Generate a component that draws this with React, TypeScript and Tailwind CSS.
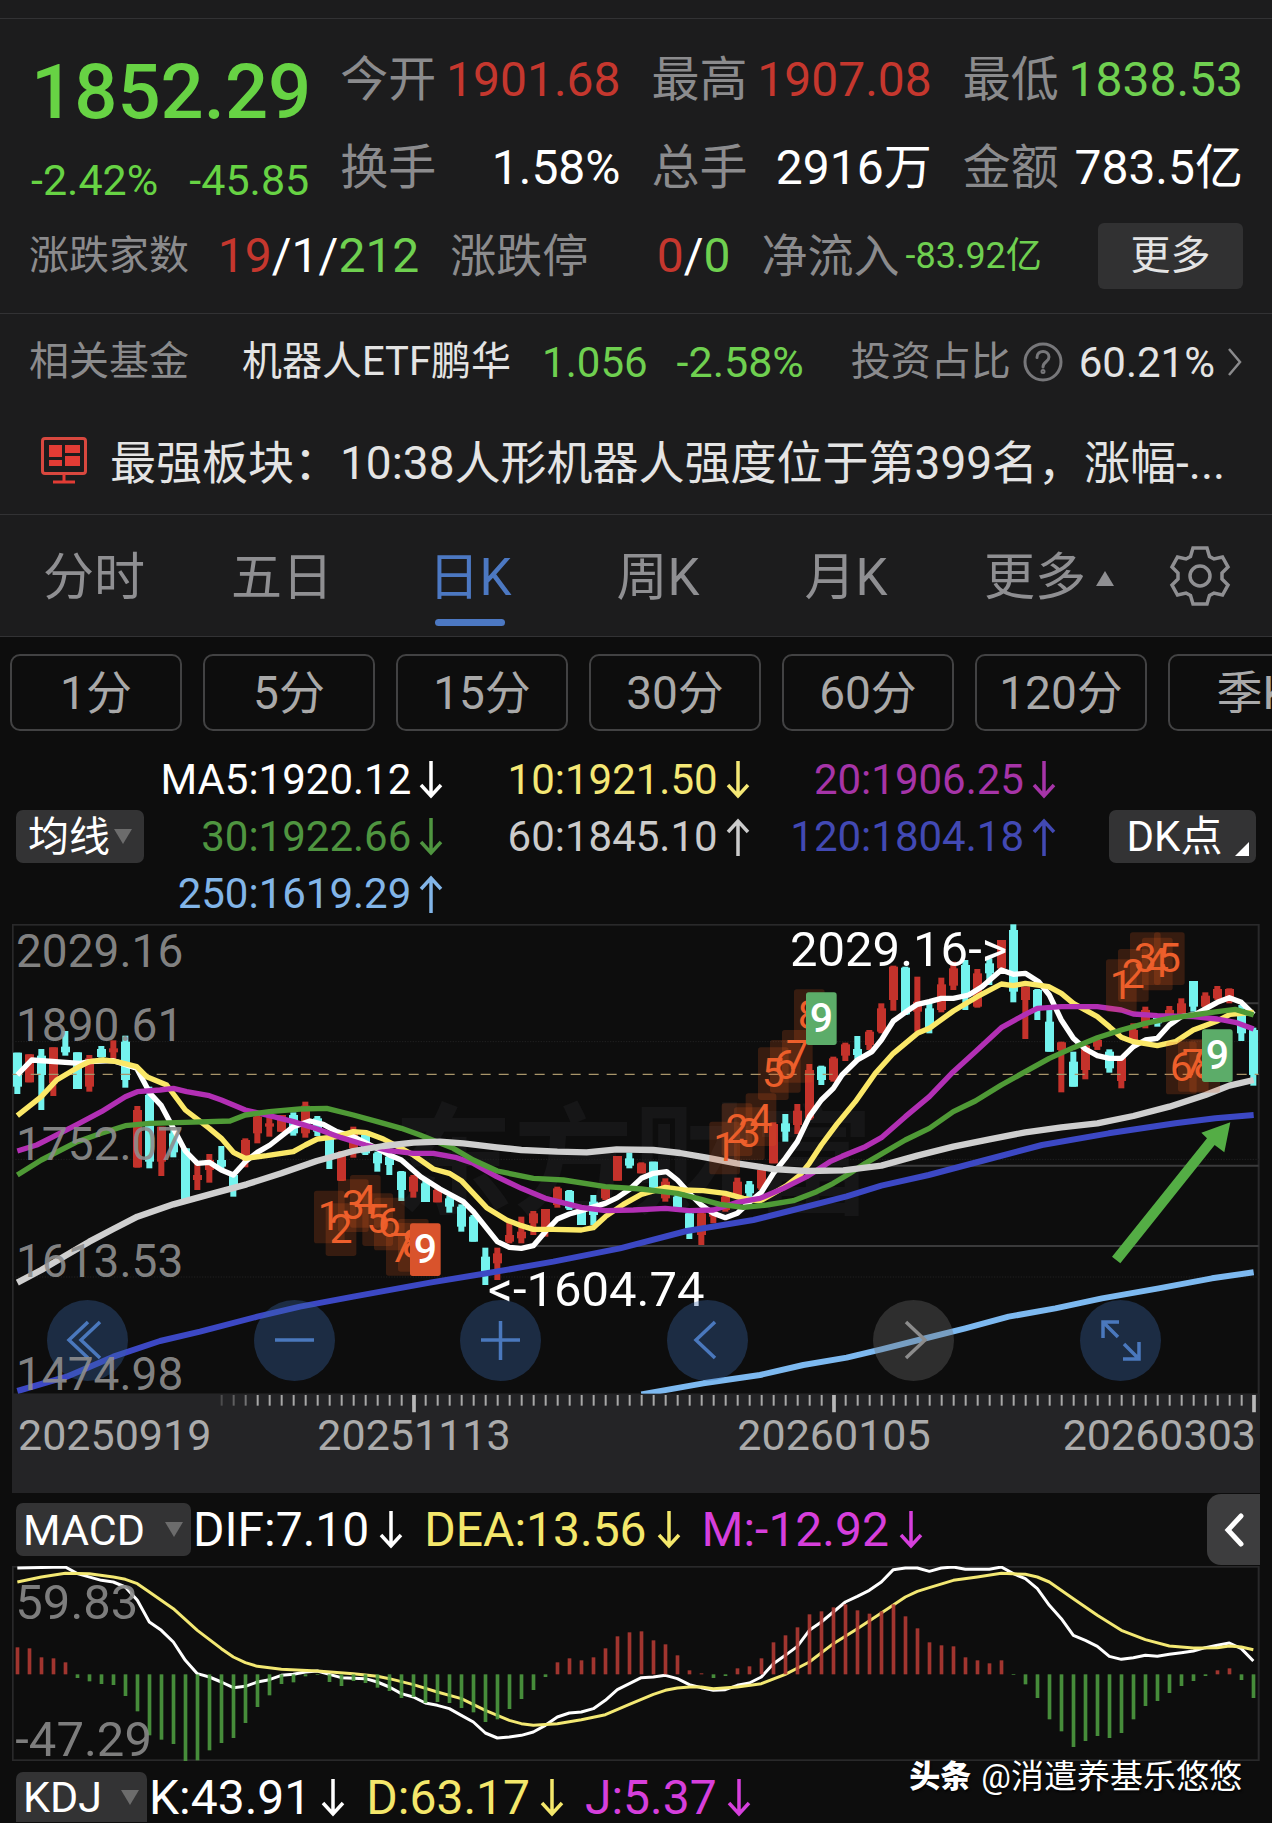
import React from "react";

type Candle = [kind: "u" | "d", high: number, low: number, top: number, bottom: number];
type Point = [number, number];

/* Chart geometry: three drawing units per pixel, one trading day every 36 units. */
const STEP = 36;
const FIRST = 52;
const dayX = (i: number) => FIRST + STEP * i;

const CANDLES: Candle[] = [
  ["d", 413, 537, 413, 515], ["u", 418, 502, 418, 502], ["d", 402, 585, 422, 480], ["u", 397, 543, 397, 505],
  ["d", 348, 422, 395, 412], ["d", 412, 522, 412, 522], ["u", 420, 530, 430, 515], ["d", 393, 428, 402, 426],
  ["u", 376, 435, 400, 412], ["d", 362, 518, 380, 495], ["u", 573, 758, 585, 757], ["d", 515, 760, 540, 740],
  ["u", 635, 783, 635, 740], ["d", 640, 727, 655, 712], ["d", 700, 855, 700, 855], ["u", 740, 825, 780, 795],
  ["u", 717, 803, 735, 765], ["d", 693, 765, 735, 755], ["d", 775, 845, 780, 815], ["u", 670, 757, 675, 730],
  ["u", 600, 685, 605, 655], ["u", 600, 665, 625, 635], ["u", 600, 650, 600, 650], ["d", 592, 662, 600, 655],
  ["u", 560, 668, 572, 655], ["d", 603, 663, 610, 650], ["d", 670, 762, 672, 732], ["u", 708, 798, 712, 797],
  ["u", 635, 728, 645, 700], ["d", 655, 720, 660, 715], ["d", 710, 770, 715, 745], ["d", 715, 780, 725, 750],
  ["d", 768, 858, 770, 825], ["u", 780, 848, 785, 830], ["d", 795, 861, 805, 861], ["u", 815, 862, 825, 862],
  ["d", 843, 893, 850, 875], ["d", 868, 950, 875, 935], ["d", 900, 980, 905, 980], ["d", 998, 1110, 1025, 1080],
  ["u", 998, 1095, 1015, 1045], ["u", 920, 985, 960, 980], ["u", 905, 985, 950, 970], ["u", 888, 960, 895, 925],
  ["u", 882, 965, 882, 950], ["u", 815, 878, 820, 870], ["d", 825, 885, 828, 880], ["d", 885, 930, 890, 930],
  ["d", 840, 930, 860, 900], ["u", 820, 855, 820, 850], ["u", 723, 797, 723, 797], ["d", 712, 760, 730, 752],
  ["u", 742, 775, 745, 775], ["d", 740, 820, 740, 818], ["u", 790, 860, 800, 850], ["d", 840, 880, 845, 878],
  ["d", 890, 972, 895, 940], ["u", 890, 990, 895, 960], ["u", 880, 925, 890, 905], ["u", 835, 890, 845, 885],
  ["u", 788, 840, 800, 840], ["d", 798, 850, 808, 835], ["u", 765, 825, 765, 820], ["u", 622, 745, 627, 745],
  ["d", 597, 680, 625, 650], ["u", 567, 657, 587, 630], ["u", 447, 615, 465, 610], ["d", 452, 510, 455, 495],
  ["u", 425, 500, 430, 495], ["u", 383, 438, 388, 422], ["d", 363, 432, 402, 420], ["u", 345, 405, 350, 390],
  ["u", 265, 355, 280, 350], ["u", 152, 287, 155, 255], ["d", 155, 300, 158, 298], ["u", 185, 350, 260, 290],
  ["d", 255, 355, 280, 340], ["u", 188, 292, 208, 285], ["u", 140, 225, 160, 212], ["d", 135, 285, 150, 240],
  ["u", 162, 278, 175, 275], ["d", 130, 210, 145, 175], ["u", 75, 165, 75, 160], ["d", 28, 262, 45, 230],
  ["u", 215, 372, 215, 255], ["d", 222, 315, 225, 280], ["d", 275, 410, 320, 410], ["u", 380, 532, 382, 405],
  ["d", 410, 515, 440, 515], ["u", 390, 493, 392, 465], ["u", 370, 405, 375, 395], ["d", 403, 473, 410, 460],
  ["u", 425, 520, 425, 498], ["u", 325, 380, 345, 375], ["u", 275, 340, 285, 325], ["d", 300, 335, 302, 325],
  ["u", 273, 310, 285, 305], ["u", 250, 305, 265, 300], ["d", 198, 290, 198, 275], ["u", 232, 280, 242, 275],
  ["u", 213, 255, 222, 250], ["u", 220, 265, 222, 250], ["d", 270, 378, 300, 355], ["d", 338, 512, 345, 480],
];

const MA_LINES: { color: string; width: number; points: string }[] = [
  {
    color: "#ffffff", width: 16,
    points: "52,480 95,435 240,445 268,440 340,437 410,460 450,535 484,572 520,640 556,708 592,745 628,742 664,765 700,780 736,740 772,712 810,690 880,635 930,618 970,628 1010,650 1060,665 1120,695 1168,720 1204,735 1262,785 1320,822 1390,860 1420,890 1492,980 1528,997 1564,1000 1600,992 1636,950 1672,912 1708,897 1744,887 1816,865 1852,848 1890,822 1924,790 1960,775 2000,770 2032,795 2068,835 2104,870 2140,895 2176,908 2212,895 2248,862 2284,832 2320,775 2356,730 2392,680 2428,605 2464,555 2500,520 2526,480 2572,435 2616,410 2644,375 2680,318 2716,292 2752,268 2788,260 2824,250 2860,250 2906,240 2946,215 3004,165 3040,178 3076,175 3116,200 3148,240 3184,315 3220,370 3256,402 3292,422 3328,430 3364,430 3400,395 3436,375 3472,370 3508,330 3544,305 3586,298 3652,262 3688,248 3724,262 3761,298",
  },
  {
    color: "#fbe868", width: 16,
    points: "52,602 124,545 170,495 232,458 268,440 310,435 350,440 410,455 440,485 500,510 556,585 628,640 664,670 700,712 736,730 800,722 880,710 916,690 952,672 1010,665 1060,650 1100,653 1150,672 1204,700 1240,720 1300,762 1348,775 1384,797 1420,835 1460,878 1520,915 1564,932 1600,943 1660,943 1744,945 1780,938 1816,905 1870,868 1924,838 1996,817 2050,825 2110,827 2176,835 2230,850 2280,858 2320,835 2360,812 2400,780 2428,745 2464,690 2510,628 2566,560 2626,475 2680,415 2716,385 2752,355 2788,340 2860,288 2932,245 3004,207 3040,212 3076,205 3146,215 3184,235 3220,265 3292,305 3328,335 3364,367 3400,380 3472,392 3526,380 3580,345 3652,318 3690,298 3761,292",
  },
  {
    color: "#b22fb4", width: 16,
    points: "52,708 110,690 160,665 232,628 304,590 376,545 412,530 480,525 520,520 560,530 628,542 664,555 736,585 808,602 880,620 952,642 1024,668 1096,690 1168,707 1240,715 1300,715 1370,728 1420,745 1490,785 1564,820 1636,850 1744,877 1816,887 1900,885 1996,880 2068,887 2140,885 2212,862 2280,850 2350,820 2420,785 2490,740 2526,724 2596,695 2644,668 2716,605 2788,545 2860,470 2926,410 3004,338 3076,298 3112,280 3184,275 3292,275 3364,285 3400,297 3472,302 3580,305 3652,312 3706,322 3761,342",
  },
  {
    color: "#4f9a36", width: 16,
    points: "52,780 124,735 232,680 304,655 376,632 450,625 556,622 690,618 736,600 808,590 900,582 980,580 1060,600 1132,620 1204,640 1260,660 1310,680 1360,700 1420,735 1492,768 1600,790 1690,795 1816,815 1924,822 2032,835 2104,853 2160,868 2230,877 2300,870 2380,857 2450,830 2500,805 2550,775 2596,745 2716,675 2788,640 2860,590 2926,558 3004,510 3076,470 3148,430 3220,398 3292,368 3364,345 3436,325 3508,310 3580,300 3652,290 3706,283 3761,300",
  },
  {
    color: "#cfcfcf", width: 19,
    points: "52,1103 124,1065 196,1022 268,980 340,942 412,905 520,868 640,835 740,808 844,775 950,738 1060,708 1150,693 1240,683 1320,680 1390,685 1490,697 1564,705 1672,710 1760,712 1850,703 1960,705 2040,714 2120,728 2210,745 2320,762 2420,768 2530,766 2644,752 2752,722 2860,695 2968,673 3076,652 3184,637 3292,625 3400,603 3508,575 3616,540 3688,512 3761,495",
  },
  {
    color: "#3c48c4", width: 18,
    points: "52,1428 200,1385 340,1325 480,1278 600,1250 772,1205 900,1175 1060,1145 1290,1103 1460,1075 1660,1040 1860,1000 2060,948 2260,915 2380,885 2540,844 2644,812 2786,780 2956,735 3126,690 3326,655 3526,625 3646,610 3761,600",
  },
  {
    color: "#7db9f0", width: 18,
    points: "1924,1438 2110,1405 2280,1380 2410,1350 2540,1328 2644,1303 2756,1275 2896,1240 3026,1205 3166,1180 3306,1150 3476,1120 3636,1090 3761,1072",
  },
];

const COUNTS: { label: string; x: number; y: number; solid?: string }[] = [
  { label: "1", x: 942, y: 827 }, { label: "2", x: 977, y: 865 }, { label: "3", x: 1014, y: 793 },
  { label: "4", x: 1050, y: 780 }, { label: "5", x: 1087, y: 835 }, { label: "6", x: 1122, y: 848 },
  { label: "7", x: 1158, y: 924 }, { label: "8", x: 1194, y: 912 }, { label: "9", x: 1230, y: 925, solid: "#d9532c" },
  { label: "1", x: 2128, y: 620 }, { label: "2", x: 2165, y: 565 }, { label: "3", x: 2202, y: 577 },
  { label: "4", x: 2237, y: 535 }, { label: "5", x: 2274, y: 397 }, { label: "6", x: 2310, y: 375 },
  { label: "7", x: 2346, y: 345 }, { label: "8", x: 2382, y: 223 }, { label: "9", x: 2418, y: 232, solid: "#5cac69" },
  { label: "1", x: 3318, y: 133 }, { label: "2", x: 3354, y: 102 }, { label: "3", x: 3390, y: 52 },
  { label: "4", x: 3426, y: 68 }, { label: "5", x: 3462, y: 52 }, { label: "6", x: 3498, y: 380 },
  { label: "7", x: 3534, y: 372 }, { label: "8", x: 3568, y: 375 }, { label: "9", x: 3606, y: 343, solid: "#5cac69" },
];

const ZERO = 822;
const HISTOGRAM = [
  741, 744, 771, 774, 786, 833, 843, 851, 854, 887, 933, 1005, 1018, 1031, 1082, 1080, 1050, 1028, 1013, 968, 920,
  885, 851, 846, 828, 824, 845, 857, 842, 848, 862, 872, 893, 890, 908, 905, 908, 923, 936, 965, 957, 926, 896, 869,
  830, 786, 774, 780, 771, 744, 708, 696, 693, 720, 732, 765, 810, 819, 833, 827, 804, 798, 774, 726, 705, 681, 642,
  633, 621, 612, 630, 640, 633, 612, 648, 684, 726, 735, 738, 771, 780, 789, 780, 824, 852, 893, 957, 993, 1040,
  1022, 1007, 1013, 998, 957, 917, 902, 878, 857, 842, 827, 810, 804, 839, 893,
];

const DIF: Point[] = [
  [0, 503], [4, 500], [5, 520], [7, 540], [8, 545], [9, 560], [10, 600], [11, 665], [12, 690], [13, 725], [14, 780],
  [15, 820], [16, 830], [17, 845], [18, 862], [19, 858], [20, 845], [21, 838], [22, 825], [23, 822], [24, 815],
  [25, 812], [26, 822], [27, 832], [29, 835], [30, 845], [31, 860], [32, 880], [33, 890], [34, 908], [35, 915],
  [36, 925], [37, 945], [38, 965], [39, 998], [40, 1013], [41, 1010], [42, 1005], [43, 995], [44, 975], [45, 950],
  [46, 938], [47, 935], [48, 925], [49, 900], [50, 868], [51, 850], [52, 832], [53, 830], [54, 825], [55, 835],
  [56, 853], [57, 862], [58, 870], [59, 868], [60, 855], [61, 848], [62, 830], [63, 790], [64, 765], [65, 738],
  [66, 690], [67, 665], [68, 635], [69, 605], [70, 588], [71, 570], [72, 545], [73, 508], [74, 503], [75, 503],
  [76, 513], [77, 503], [78, 500], [79, 507], [81, 507], [82, 500], [83, 520], [84, 535], [85, 565], [86, 615],
  [87, 655], [88, 705], [89, 720], [90, 738], [91, 768], [92, 777], [93, 772], [94, 765], [95, 768], [96, 762],
  [97, 757], [98, 752], [99, 742], [100, 735], [101, 728], [102, 745], [103, 782],
];

const DEA: Point[] = [
  [0, 545], [2, 530], [4, 519], [6, 520], [8, 530], [9, 537], [10, 550], [11, 575], [13, 625], [15, 690], [17, 745],
  [18, 770], [19, 787], [20, 798], [22, 807], [25, 812], [28, 820], [30, 828], [31, 835], [33, 853], [35, 875],
  [37, 895], [39, 930], [41, 960], [42, 970], [43, 975], [45, 970], [47, 958], [49, 943], [51, 912], [52, 897],
  [53, 882], [54, 870], [55, 863], [56, 860], [57, 860], [58, 865], [60, 860], [62, 850], [64, 822], [66, 785],
  [68, 730], [70, 685], [72, 638], [74, 590], [75, 573], [76, 562], [78, 540], [80, 530], [82, 519], [84, 522],
  [85, 530], [86, 545], [88, 595], [90, 645], [92, 690], [94, 718], [96, 737], [98, 743], [100, 742], [101, 737],
  [102, 740], [103, 748],
];

const toPoints = (list: Point[]) => list.map(([i, y]) => `${dayX(i)},${y}`).join(" ");

function Arrow({ dir }: { dir: "up" | "down" }) {
  return (
    <svg viewBox="0 0 24 38" className="h-[38px] w-6 shrink-0" fill="none" stroke="currentColor" strokeWidth="3.5" role="img" aria-label={dir === "up" ? "↑" : "↓"}>
      <path d={dir === "up" ? "M12 38V3M2 14 12 3l10 11" : "M12 0v35M2 24l10 11 10-11"} />
    </svg>
  );
}

function Caret() {
  return (
    <svg viewBox="0 0 18 15" className="h-[15px] w-[18px] shrink-0" fill="#6c6c6c" aria-hidden="true">
      <path d="M0 0h18L9 15z" />
    </svg>
  );
}

function Stat({ label, value, tone = "text-white" }: { label: string; value: string; tone?: string }) {
  return (
    <div className="flex items-center justify-between text-[48px] leading-[88px] whitespace-nowrap">
      <span className="text-[#8b8b8d]">{label}</span>
      <span className={tone}>{value}</span>
    </div>
  );
}

function Summary() {
  return (
    <section className="mt-[18px] border-y border-[#323234] px-[29px] pt-[17px] pb-[13px]">
      <div className="grid grid-cols-4 gap-x-[31px] whitespace-nowrap">
        <div className="row-span-2 pl-0.5 text-[#67d344]">
          <div className="text-[76px] leading-[112px] font-medium">1852.29</div>
          <div className="flex justify-between text-[43px] leading-[64px]">
            <span>-2.42%</span>
            <span>-45.85</span>
          </div>
        </div>
        <Stat label="今开" value="1901.68" tone="text-[#c5372e]" />
        <Stat label="最高" value="1907.08" tone="text-[#c5372e]" />
        <Stat label="最低" value="1838.53" tone="text-[#6fd050]" />
        <Stat label="换手" value="1.58%" />
        <Stat label="总手" value="2916万" />
        <Stat label="金额" value="783.5亿" />
      </div>
      <div className="grid grid-cols-[39fr_28fr_28fr_17fr] items-center gap-x-[31px] text-[48px] leading-[88px] whitespace-nowrap">
        <div className="flex items-center justify-between">
          <span className="text-[40px] text-[#8b8b8d]">涨跌家数</span>
          <span className="text-white">
            <span className="text-[#c5372e]">19</span>/1/<span className="text-[#6fd050]">212</span>
          </span>
        </div>
        <div className="flex items-center justify-between">
          <span className="text-[46px] text-[#8b8b8d]">涨跌停</span>
          <span className="text-white">
            <span className="text-[#c5372e]">0</span>/<span className="text-[#6fd050]">0</span>
          </span>
        </div>
        <div className="flex items-center justify-between">
          <span className="text-[46px] text-[#8b8b8d]">净流入</span>
          <span className="text-[36px] text-[#6fd050]">-83.92亿</span>
        </div>
        <button className="ml-auto h-[66px] w-[145px] rounded-[6px] bg-[#313132] text-[40px] leading-[66px] text-[#e4e4e4]">更多</button>
      </div>
    </section>
  );
}

function FundRow() {
  return (
    <a href="#fund" className="flex h-[94px] items-center px-[29px] pt-0.5 text-[40px] whitespace-nowrap text-[#e4e4e4]">
      <span className="text-[#8b8b8d]">相关基金</span>
      <span className="ml-[53px]">机器人ETF鹏华</span>
      <span className="ml-[31px] text-[42px] text-[#6fd050]">1.056</span>
      <span className="ml-[29px] text-[43px] text-[#6fd050]">-2.58%</span>
      <span className="ml-auto text-[#8b8b8d]">投资占比</span>
      <svg viewBox="0 0 40 40" className="ml-3 size-10" fill="none" stroke="#77777a" strokeWidth="3" role="img" aria-label="说明">
        <circle cx="20" cy="20" r="18" />
        <path d="M14 15.5c0-8 12-8 12-.5 0 5-6 4.500-6 10" strokeLinecap="round" />
        <circle cx="20" cy="29.500" r="1" />
      </svg>
      <span className="ml-4 text-[42px]">60.21%</span>
      <svg viewBox="0 0 16 30" className="ml-3 h-[30px] w-4" fill="none" stroke="#8b8b8d" strokeWidth="2.5" aria-hidden="true">
        <path d="m2 2 11 13L2 28" />
      </svg>
    </a>
  );
}

function NewsRow() {
  return (
    <div className="flex h-[107px] items-center border-b border-[#323234] pr-[30px] pl-[41px]">
      <svg viewBox="0 0 46 48" className="h-12 w-[46px] shrink-0" fill="#e23c35" aria-hidden="true">
        <rect x="1.500" y="1.500" width="43" height="35" rx="2.500" fill="none" stroke="#d8483f" strokeWidth="3" />
        <path d="M8 8h13v12H8zM24 8h15v8H24zM8 23h13v6H8zM24 19h15v10H24zM21.500 37h3v7h-3zM12 43.500h22v3H12z" />
      </svg>
      <p className="ml-[23px] truncate pt-1 text-[46px] leading-[66px] text-[#e4e4e4]">最强板块：10:38人形机器人强度位于第399名，涨幅-...</p>
    </div>
  );
}

function PeriodTabs() {
  const tabs = ["分时", "五日", "日K", "周K", "月K"];
  return (
    <nav className="grid h-[122px] grid-cols-[188fr_188fr_188fr_188fr_188fr_218fr_84fr] items-stretch border-b border-[#323234] pr-[30px] text-[51px] whitespace-nowrap text-[#8f8f92]">
      {tabs.map((t) =>
        t === "日K" ? (
          <button key={t} aria-current="page" className="relative pt-1.5 text-[#4c78c2]">
            {t}
            <span className="absolute bottom-2.5 left-1/2 h-[7px] w-[70px] -translate-x-1/2 rounded-full bg-[#4c78c2]" />
          </button>
        ) : (
          <button key={t} className="pt-1.5">{t}</button>
        ),
      )}
      <button className="flex items-center justify-center gap-2.5 pt-1.5">
        更多
        <svg viewBox="0 0 18 15" className="h-[15px] w-[18px]" fill="currentColor" aria-hidden="true">
          <path d="M0 15h18L9 0z" />
        </svg>
      </button>
      <button aria-label="设置" className="flex items-center justify-center">
        <svg viewBox="-32 -32 64 64" className="size-16" fill="none" stroke="currentColor" strokeWidth="3.5" aria-hidden="true">
          <path d="M-7-28H7L9.500-19.500 14-17 22.500-19 28-9 22-3V3L28 9 22.500 19 14 17 9.500 19.500 7 28H-7L-9.500 19.500-14 17-22.500 19-28 9-22 3V-3L-28-9-22.500-19-14-17-9.500-19.500Z" />
          <circle r="10" />
        </svg>
      </button>
    </nav>
  );
}

function MinutePills() {
  return (
    <div className="flex gap-[21px] overflow-hidden pt-[17px] pl-2.5">
      {["1分", "5分", "15分", "30分", "60分", "120分", "季K"].map((t) => (
        <button key={t} className="h-[77px] w-[172px] shrink-0 rounded-[10px] border-2 border-[#424243] text-[46px] leading-[72px] text-[#a9a9a9]">
          {t}
        </button>
      ))}
    </div>
  );
}

function MovingAverages() {
  const items: { text: string; dir: "up" | "down"; tone: string }[] = [
    { text: "MA5:1920.12", dir: "down", tone: "text-white" },
    { text: "10:1921.50", dir: "down", tone: "text-[#f4e775]" },
    { text: "20:1906.25", dir: "down", tone: "text-[#a634a8]" },
    { text: "30:1922.66", dir: "down", tone: "text-[#4f9540]" },
    { text: "60:1845.10", dir: "up", tone: "text-[#cbcbcb]" },
    { text: "120:1804.18", dir: "up", tone: "text-[#4249b4]" },
    { text: "250:1619.29", dir: "up", tone: "text-[#82b5e8]" },
  ];
  return (
    <div className="mt-5 flex items-center px-4 pb-0.5 text-[42px] whitespace-nowrap">
      <button aria-haspopup="menu" className="flex h-[53px] w-32 items-center justify-center gap-1 rounded-[7px] bg-[#333334] text-[41px] leading-[50px] text-white">
        均线
        <Caret />
      </button>
      <div className="grid flex-1 grid-cols-[299fr_306fr_306fr] leading-[57px]">
        {items.map((m) => (
          <span key={m.text} className={`flex items-center justify-end gap-2 ${m.tone}`}>
            {m.text}
            <Arrow dir={m.dir} />
          </span>
        ))}
      </div>
      <button aria-haspopup="menu" className="relative ml-[53px] h-[53px] w-[147px] rounded-[7px] bg-[#333334] pr-4 leading-[50px] text-white">
        DK点
        <svg viewBox="0 0 14 14" className="absolute right-[7px] bottom-[7px] size-3.5" fill="#fff" aria-hidden="true">
          <path d="M14 0v14H0z" />
        </svg>
      </button>
    </div>
  );
}

const CONTROLS: { name: string; d: string; off?: boolean }[] = [
  { name: "最早", d: "M41 22 22 40l19 18M53 22 34 40l19 18" },
  { name: "缩小", d: "M21 40h39" },
  { name: "放大", d: "M21 40h39M40.500 21v39" },
  { name: "向前", d: "M48 22 29 40l19 18" },
  { name: "向后", d: "M33 22l19 18-19 18", off: true },
  { name: "全屏", d: "M39 22H23v16M23 22l15 15M59 42v17H43M44 44l15 15" },
];

function KLineChart() {
  const ticks = Array.from({ length: 86 }, (_, n) => 665 + STEP * n);
  return (
    <div className="relative mx-3">
      <svg viewBox="36 27 3744 1707" className="block w-full" role="img" aria-label="日K线图">
        <rect x="38" y="29" width="3738" height="1410" fill="none" stroke="#29292a" strokeWidth="6" />
        <text x="1180" y="870" fontSize="360" fontWeight="700" fill="#161617">东方财富</text>
        {[380, 733, 1086].map((y) => (
          <line key={y} x1="38" x2="3776" y1={y} y2={y} stroke="#202021" strokeWidth="3" strokeDasharray="4 4" />
        ))}
        <path d="M2640 752H3776M1600 993H3776M3724 265H3776" stroke="#3a3a3b" strokeWidth="6" />
        {CANDLES.map(([kind, high, low, top, bottom], i) => (
          <g key={i} fill={kind === "u" ? "#c4322b" : "#74f3ee"}>
            <rect x={dayX(i) - 9} y={high} width="18" height={low - high} />
            <rect x={dayX(i) - 13} y={top} width="27" height={bottom - top} />
          </g>
        ))}
        <line x1="38" x2="3776" y1="478" y2="478" stroke="#a8956a" strokeWidth="4" strokeDasharray="30 24" />
        {MA_LINES.map((l) => (
          <polyline key={l.color} points={l.points} fill="none" stroke={l.color} strokeWidth={l.width} strokeLinejoin="round" />
        ))}
        {COUNTS.map((c, i) => (
          <g key={i}>
            <rect x={c.x} y={c.y} width="92" height="158" rx="8" fill={c.solid ?? "#e2581c"} fillOpacity={c.solid ? 1 : 0.2} />
            <text x={c.x + 46} y={c.y + 118} fontSize="123" textAnchor="middle" fontWeight={c.solid ? 500 : 400} fill={c.solid ? "#ffffff" : "#ee5f2c"}>
              {c.label}
            </text>
          </g>
        ))}
        <path d="m3336 1025 285-355-17-17 87-31-18 90-29-22-283 355z" fill="#54ad45" />
        <g fontSize="147" fill="#ffffff">
          <text x="2370" y="152">2029.16-&gt;</text>
          <text x="1464" y="1172">&lt;-1604.74</text>
        </g>
        <rect x="36" y="1436" width="3744" height="298" fill="#242426" />
        {ticks.map((x, n) => (
          <line key={x} x1={x} x2={x} y1="1440" y2="1472" stroke="#a8a8a8" strokeWidth="6" opacity={n < 3 ? 0.3 + n * 0.15 : 1} />
        ))}
        <path d="M1242 1440v52M2502 1440v52M3762 1440v52" stroke="#b8b8b8" strokeWidth="11" />
        <g fontSize="129" fill="#ababab">
          <text x="54" y="1605">20250919</text>
          <text x="1242" y="1605" textAnchor="middle">20251113</text>
          <text x="2502" y="1605" textAnchor="middle">20260105</text>
          <text x="3768" y="1605" textAnchor="end">20260303</text>
        </g>
      </svg>
      <div className="absolute inset-x-0 top-[66%] flex justify-between pr-[99px] pl-[35px]">
        {CONTROLS.map((c) => (
          <button
            key={c.name}
            aria-label={c.name}
            disabled={c.off}
            className={c.off ? "size-[81px] rounded-full bg-[#6d6d6d]/35 text-[#8c8c8c]" : "size-[81px] rounded-full bg-[#3a66a8]/35 text-[#4a78bd]"}
          >
            <svg viewBox="0 0 81 81" fill="none" stroke="currentColor" strokeWidth="3.5" aria-hidden="true">
              <path d={c.d} />
            </svg>
          </button>
        ))}
      </div>
      <svg viewBox="36 27 3744 1707" className="pointer-events-none absolute inset-0 w-full" fill="#8d8d8d" fillOpacity="0.92" fontSize="138" role="img" aria-label="价格坐标">
        <text x="48" y="157">2029.16</text>
        <text x="48" y="379">1890.61</text>
        <text x="48" y="734">1752.07</text>
        <text x="48" y="1085">1613.53</text>
        <text x="48" y="1426">1474.98</text>
      </svg>
    </div>
  );
}

function Reading({ text, tone }: { text: string; tone: string }) {
  return (
    <span className={`flex items-center gap-2.5 ${tone}`}>
      {text}
      <Arrow dir="down" />
    </span>
  );
}

function MacdPanel() {
  return (
    <section>
      <div className="flex h-[73px] items-center pr-3 pl-4 text-[48px] whitespace-nowrap">
        <button aria-haspopup="menu" className="flex h-[53px] w-[175px] items-center justify-between rounded-[7px] bg-[#333334] pr-2 pl-[7px] text-[43px] leading-[50px] text-white">
          MACD
          <Caret />
        </button>
        <div className="ml-0.5 flex gap-[21px]">
          <Reading text="DIF:7.10" tone="text-white" />
          <Reading text="DEA:13.56" tone="text-[#f4e76b]" />
          <Reading text="M:-12.92" tone="text-[#d63fdc]" />
        </div>
        <button aria-label="展开" className="ml-auto flex h-[71px] w-[53px] items-center justify-center rounded-l-[14px] bg-[#3d3d3e]">
          <svg viewBox="0 0 20 34" className="h-[34px] w-5" fill="none" stroke="#fff" strokeWidth="5" strokeLinecap="round" aria-hidden="true">
            <path d="M17 3 4 17l13 14" />
          </svg>
        </button>
      </div>
      <div className="mx-3">
        <svg viewBox="36 497 3744 585" className="block w-full" role="img" aria-label="MACD">
          <rect x="38" y="499" width="3738" height="581" fill="none" stroke="#29292a" strokeWidth="6" />
          <polyline points={toPoints(DIF)} fill="none" stroke="#fff" strokeWidth="9" strokeLinejoin="round" />
          <polyline points={toPoints(DEA)} fill="none" stroke="#f3e873" strokeWidth="9" strokeLinejoin="round" />
          {HISTOGRAM.map((v, i) => (
            <rect key={i} x={dayX(i) - 5} y={Math.min(v, ZERO)} width="11" height={Math.abs(v - ZERO)} fill={v < ZERO ? "#b13a33" : "#4d9a3f"} fillOpacity="0.9" />
          ))}
          <g fontSize="147" fill="#8a8a8a" fillOpacity="0.9">
            <text x="46" y="655">59.83</text>
            <text x="46" y="1068">-47.29</text>
          </g>
        </svg>
      </div>
    </section>
  );
}

function KdjRow() {
  return (
    <section className="relative flex items-start pt-[11px] pl-4 text-[48px] leading-[51px] whitespace-nowrap">
      <button aria-haspopup="menu" className="flex h-[50px] w-[131px] items-center justify-between rounded-t-[7px] bg-[#333334] pr-2 pl-[7px] text-[43px] text-white">
        KDJ
        <Caret />
      </button>
      <div className="ml-0.5 flex gap-[21px]">
        <Reading text="K:43.91" tone="text-white" />
        <Reading text="D:63.17" tone="text-[#f4e76b]" />
        <Reading text="J:5.37" tone="text-[#d63fdc]" />
      </div>
      <div className="absolute -top-[7px] right-[30px] flex items-center gap-2.5 text-[33px] leading-[46px] text-white [text-shadow:1px_2px_2px_rgba(0,0,0,0.8)]">
        <b className="text-[31px] font-black">头条</b>
        <span>@消遣养基乐悠悠</span>
      </div>
    </section>
  );
}

export default function App() {
  return (
    <main className="w-full overflow-hidden bg-[#0d0d0d] font-['Roboto','Noto_Sans_CJK_SC',sans-serif]">
      <header className="flow-root bg-[#1c1c1d]">
        <Summary />
        <FundRow />
        <NewsRow />
        <PeriodTabs />
      </header>
      <MinutePills />
      <MovingAverages />
      <KLineChart />
      <MacdPanel />
      <KdjRow />
    </main>
  );
}
